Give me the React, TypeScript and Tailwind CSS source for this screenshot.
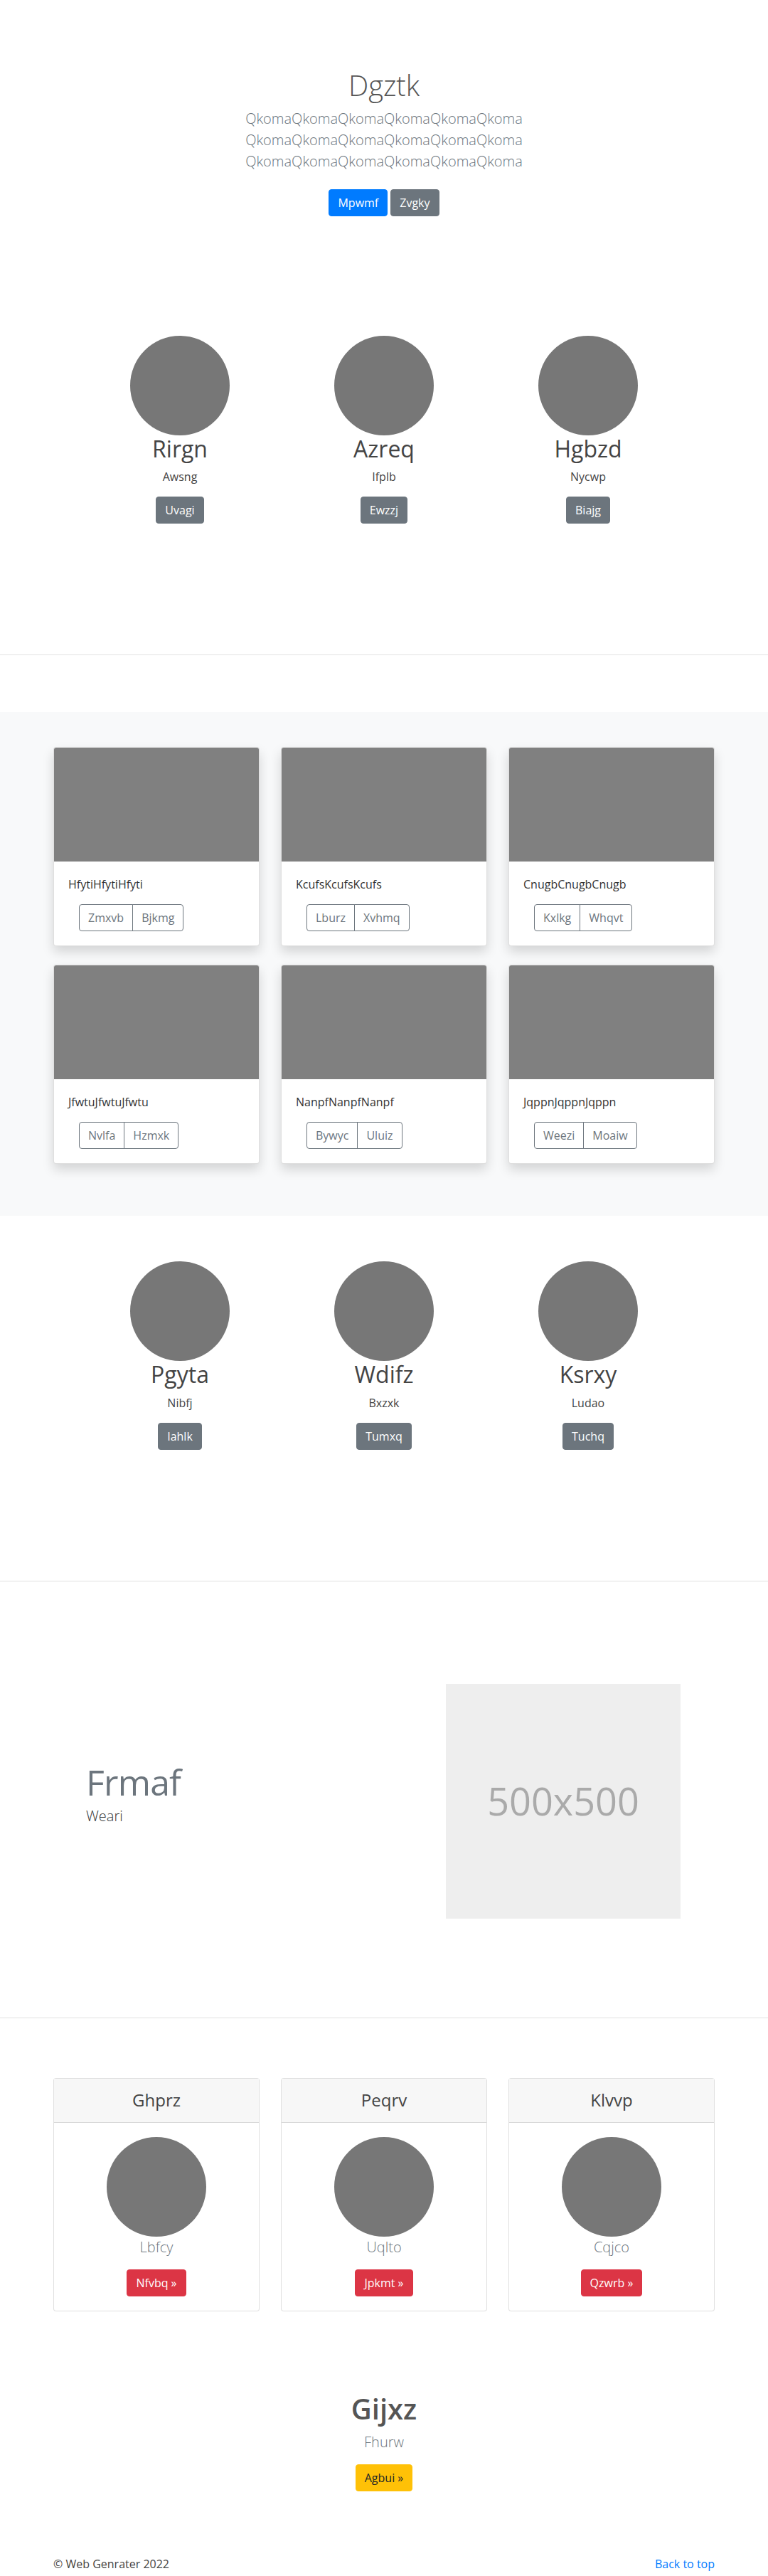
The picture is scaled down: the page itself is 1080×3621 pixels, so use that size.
import React from 'react';

const team = [
  { name: 'Rirgn', role: 'Awsng', action: 'Uvagi' },
  { name: 'Azreq', role: 'Ifplb', action: 'Ewzzj' },
  { name: 'Hgbzd', role: 'Nycwp', action: 'Biajg' },
];

const team2 = [
  { name: 'Pgyta', role: 'Nibfj', action: 'Iahlk' },
  { name: 'Wdifz', role: 'Bxzxk', action: 'Tumxq' },
  { name: 'Ksrxy', role: 'Ludao', action: 'Tuchq' },
];

const albums = [
  { text: 'HfytiHfytiHfyti', a: 'Zmxvb', b: 'Bjkmg' },
  { text: 'KcufsKcufsKcufs', a: 'Lburz', b: 'Xvhmq' },
  { text: 'CnugbCnugbCnugb', a: 'Kxlkg', b: 'Whqvt' },
  { text: 'JfwtuJfwtuJfwtu', a: 'Nvlfa', b: 'Hzmxk' },
  { text: 'NanpfNanpfNanpf', a: 'Bywyc', b: 'Uluiz' },
  { text: 'JqppnJqppnJqppn', a: 'Weezi', b: 'Moaiw' },
];

const plans = [
  { title: 'Ghprz', sub: 'Lbfcy', cta: 'Nfvbq »' },
  { title: 'Peqrv', sub: 'Uqlto', cta: 'Jpkmt »' },
  { title: 'Klvvp', sub: 'Cqjco', cta: 'Qzwrb »' },
];

const Divider = () => <div className="h-px bg-[#e2e2e2]" />;

const TeamRow: React.FC<{ people: typeof team }> = ({ people }) => (
  <section className="pt-[64px] pb-[184px]">
    <div className="mx-auto grid w-[861px] grid-cols-3">
      {people.map((p) => (
        <div key={p.name} className="flex flex-col items-center text-center">
          <div className="h-[140px] w-[140px] rounded-full bg-[#777]" />
          <h2 className="mb-2 text-[32px] font-normal leading-[1.2] text-[#444]">{p.name}</h2>
          <p className="mb-4 text-base leading-6 text-[#444]">{p.role}</p>
          <button className="rounded border border-[#6c757d] bg-[#6c757d] px-3 py-[6px] text-base leading-6 text-white">
            {p.action}
          </button>
        </div>
      ))}
    </div>
  </section>
);

export default function App() {
  return (
    <div className="bg-white font-['Open_Sans',sans-serif] text-[#333]">
      {/* hero */}
      <section className="py-[96px] text-center">
        <h1 className="mb-2 text-[40px] font-light leading-[1.2] text-[#555]">Dgztk</h1>
        <p className="text-[20px] font-light leading-[30px] text-[#6c757d]">
          QkomaQkomaQkomaQkomaQkomaQkoma
          <br />
          QkomaQkomaQkomaQkomaQkomaQkoma
          <br />
          QkomaQkomaQkomaQkomaQkomaQkoma
        </p>
        <div className="mt-6 mb-2 flex justify-center gap-1">
          <button className="rounded border border-[#007bff] bg-[#007bff] px-3 py-[6px] text-base leading-6 text-white">
            Mpwmf
          </button>
          <button className="rounded border border-[#6c757d] bg-[#6c757d] px-3 py-[6px] text-base leading-6 text-white">
            Zvgky
          </button>
        </div>
      </section>

      <TeamRow people={team} />
      <Divider />

      {/* album */}
      <div className="h-[80px]" />
      <section className="bg-[#f8f9fa] pt-[49px] pb-[73px]">
        <div className="mx-auto grid w-[930px] grid-cols-3 gap-x-[30px] gap-y-[26px]">
          {albums.map((c) => (
            <div
              key={c.text}
              className="overflow-hidden rounded border border-[rgba(0,0,0,0.125)] bg-white shadow-[0_0.5rem_1rem_rgba(0,0,0,0.15)]"
            >
              <div className="h-[160px] bg-[#808080]" />
              <div className="p-5">
                <p className="mb-4 text-base leading-6 text-[#333]">{c.text}</p>
                <div className="ml-[15px] inline-flex">
                  <button className="rounded-l border border-[#6c757d] px-3 py-[6px] text-base leading-6 text-[#6c757d]">
                    {c.a}
                  </button>
                  <button className="-ml-px rounded-r border border-[#6c757d] px-3 py-[6px] text-base leading-6 text-[#6c757d]">
                    {c.b}
                  </button>
                </div>
              </div>
            </div>
          ))}
        </div>
      </section>

      <TeamRow people={team2} />
      <Divider />

      {/* featurette */}
      <section className="flex items-center pt-[144px] pb-[139px]">
        <div className="w-[627px] pl-[121px]">
          <h2 className="mb-2 text-[50px] font-normal leading-none tracking-[-0.05rem] text-[#6c757d]">Frmaf</h2>
          <p className="mb-4 text-[20px] font-light leading-[30px] text-[#333]">Weari</p>
        </div>
        <div className="flex h-[330px] w-[330px] items-center justify-center bg-[#eee]">
          <span className="text-[54px] text-[#aaa]">500x500</span>
        </div>
      </section>
      <Divider />

      {/* pricing cards */}
      <section className="pt-[84px]">
        <div className="mx-auto grid w-[930px] grid-cols-3 gap-x-[30px]">
          {plans.map((p) => (
            <div key={p.title} className="rounded border border-[rgba(0,0,0,0.125)] bg-white text-center">
              <div className="flex h-[62px] items-center justify-center border-b border-[rgba(0,0,0,0.125)] bg-[#f7f7f7]">
                <h4 className="text-[24px] font-medium leading-[1.2] text-[#444]">{p.title}</h4>
              </div>
              <div className="flex flex-col items-center p-5">
                <div className="h-[140px] w-[140px] rounded-full bg-[#777]" />
                <p className="mb-4 text-[20px] font-light leading-[30px] text-[#6c757d]">{p.sub}</p>
                <button className="rounded border border-[#dc3545] bg-[#dc3545] px-3 py-[6px] text-base leading-6 text-white">
                  {p.cta}
                </button>
              </div>
            </div>
          ))}
        </div>
      </section>

      {/* call to action */}
      <section className="pt-[113px] text-center">
        <h1 className="mb-2 text-[40px] font-semibold leading-[1.2] text-[#555]">Gijxz</h1>
        <p className="mb-4 text-[20px] font-light leading-[30px] text-[#6c757d]">Fhurw</p>
        <button className="rounded border border-[#ffc107] bg-[#ffc107] px-3 py-[6px] text-base leading-6 text-[#212529]">
          Agbui »
        </button>
      </section>

      {/* footer */}
      <footer className="mx-auto flex w-[930px] justify-between pt-[90px] text-base leading-6">
        <p className="text-[#444]">© Web Genrater 2022</p>
        <a href="#" className="text-[#007bff]">
          Back to top
        </a>
      </footer>
    </div>
  );
}
